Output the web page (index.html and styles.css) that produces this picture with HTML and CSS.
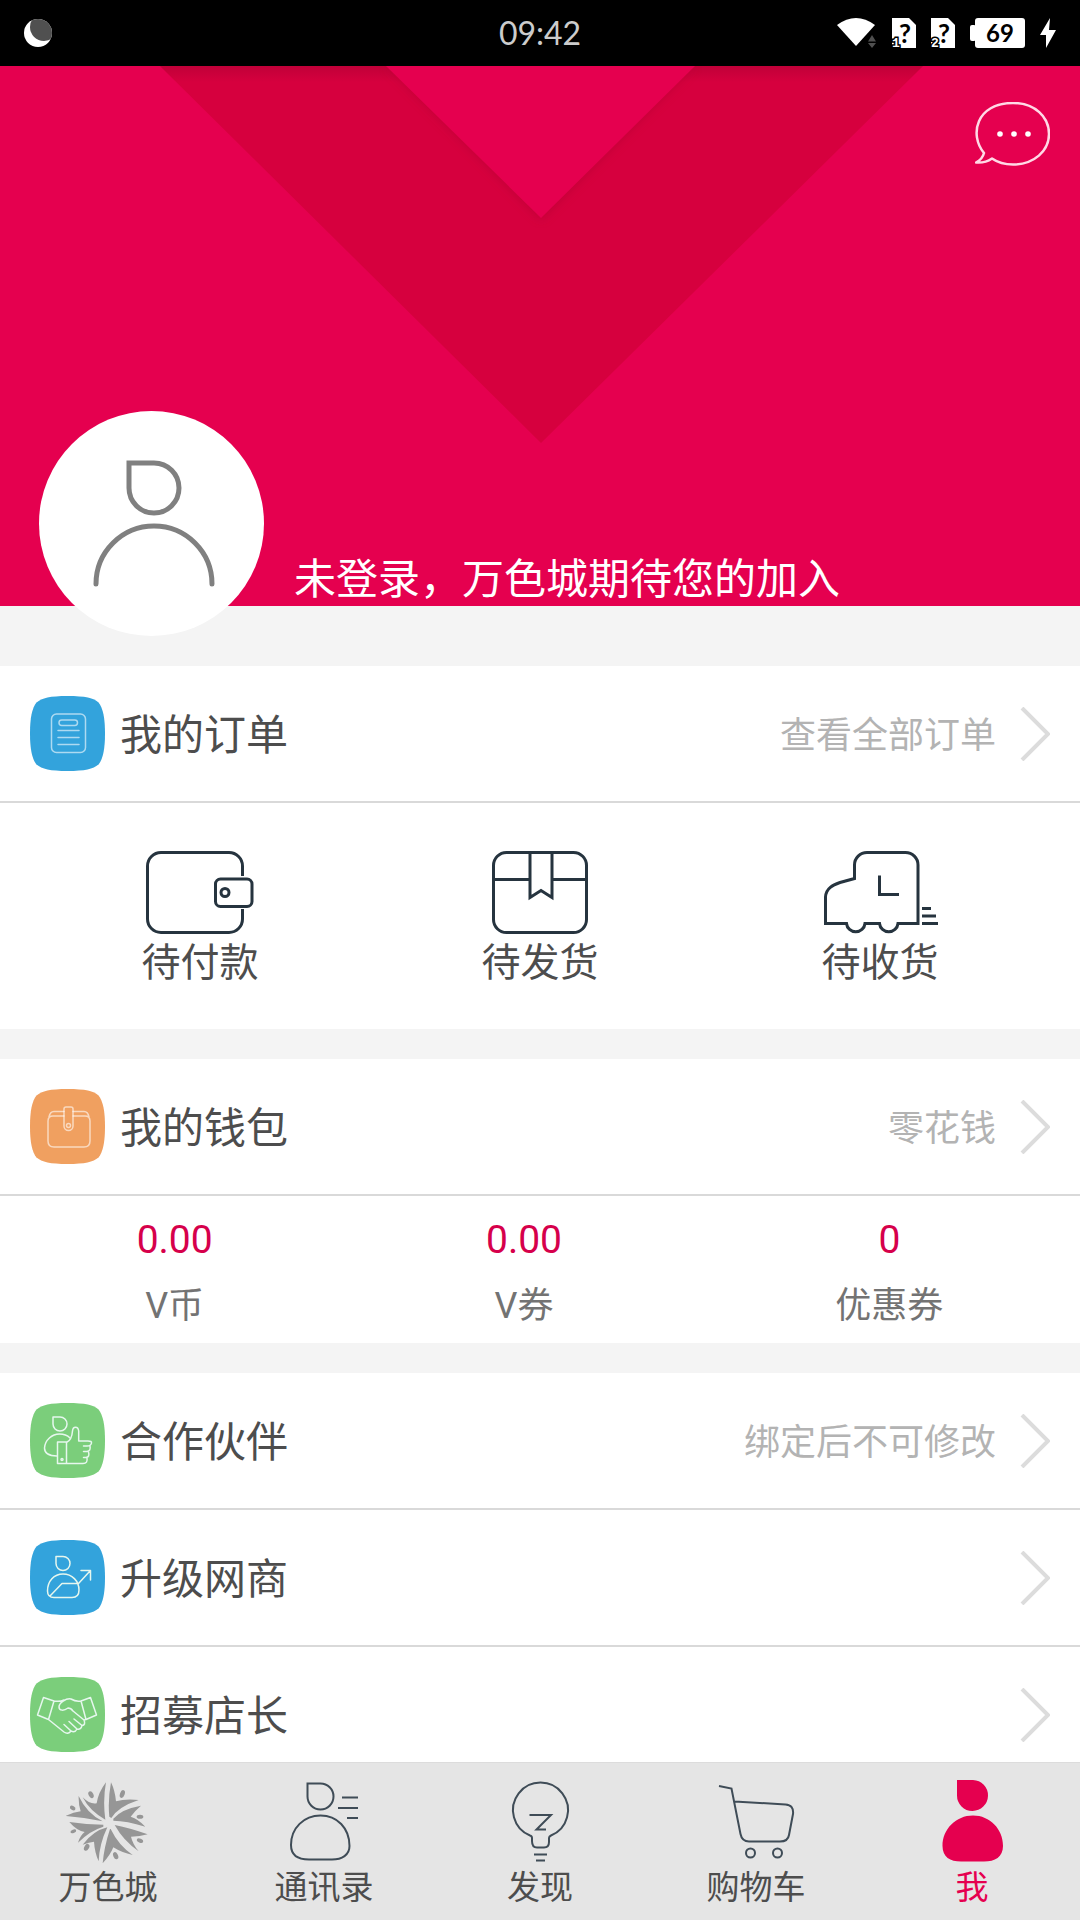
FILE: index.html
```html
<!DOCTYPE html>
<html lang="zh-CN">
<head>
<meta charset="utf-8">
<meta name="viewport" content="width=device-width, initial-scale=1">
<title>我</title>
<link rel="stylesheet" href="styles.css">
</head>
<body>
<svg class="defs" aria-hidden="true">
  <defs>
    <path id="tile" d="M37.500 0C55 0 64 2 68.500 6.500C73 12 75 22 75 37.500S73 63 68.500 68.500C63 73 55 75 37.500 75S12 73 6.500 68.500C2 63 0 53 0 37.500S2 12 6.500 6.500C12 2 20 0 37.500 0Z"/>
    <path id="chevron" d="M2 1L28 27L2 53"/>
    <path id="sim" fill="#fff" d="M0 0H17L24 7V30H0Z"/>
  </defs>
</svg>
<div class="app">
  <header class="status">
    <svg class="moon" viewBox="0 0 28 28" aria-hidden="true"><clipPath id="disc"><circle cx="14" cy="14" r="14"/></clipPath><circle cx="14" cy="14" r="14" fill="#fff"/><circle cx="20" cy="8" r="14" fill="#505050" clip-path="url(#disc)"/></svg>
    <time class="clock">09:42</time>
    <div class="signals">
      <svg class="wifi" viewBox="0 0 40 30" aria-hidden="true"><path fill="#fff" d="M0 7Q19-7 38 7L19 28Z"/><path fill="#505050" d="M31 23.500L35 17L39 23.500ZM31 25H39L35 30Z"/></svg>
      <svg class="sim" viewBox="0 0 24 30" aria-hidden="true"><use href="#sim"/><text class="sim-mark" x="13" y="25">?</text><text class="sim-slot" x="0" y="29">1</text></svg>
      <svg class="sim" viewBox="0 0 24 30" aria-hidden="true"><use href="#sim"/><text class="sim-mark" x="13" y="25">?</text><text class="sim-slot" x="0" y="29">2</text></svg>
      <span class="battery">69</span>
      <svg class="bolt" viewBox="0 0 16 30" aria-hidden="true"><path fill="#fff" d="M10 0L0 17H6L6 30L16 12H9Z"/></svg>
    </div>
  </header>

  <main class="content">
    <section class="hero">
      <svg class="hero-art" viewBox="0 0 1080 540" preserveAspectRatio="xMidYMin slice" aria-hidden="true">
        <defs>
          <linearGradient id="shade" x1="0" y1="0" x2="0" y2="1"><stop offset="0" stop-color="#a00030" stop-opacity=".4"/><stop offset="1" stop-color="#a00030" stop-opacity="0"/></linearGradient>
          <filter id="soft" x="-10%" y="-10%" width="120%" height="130%"><feGaussianBlur stdDeviation="5"/></filter>
        </defs>
        <path fill="#d6003e" d="M160 0H923L541 377Z"/>
        <path fill="url(#shade)" d="M160 0H923L907 16H176Z"/>
        <path fill="#ba0036" opacity=".7" filter="url(#soft)" d="M386 0H695L541 154Z"/>
        <path fill="#e5004f" d="M386 0H695L541 152Z"/>
      </svg>
      <a class="avatar" href="#login" aria-label="头像">
        <svg viewBox="0 0 225 225" fill="none" stroke="#808080" stroke-width="5" stroke-linecap="round"><path d="M90 52H115A25 25 0 1 1 90 77Z"/><path d="M57 173A58 58 0 0 1 173 173"/></svg>
      </a>
      <p class="greeting">未登录，万色城期待您的加入</p>
      <button class="chat" type="button" aria-label="消息">
        <svg viewBox="0 0 75 64" fill="none" stroke="#ffd9e6" stroke-width="2.500" stroke-linejoin="round"><path d="M9 51C-6 33 1 1 38 1C60 1 74 15 74 32C74 49 59 62.500 38 62.500C30 62.500 22 60 17 56.500C12 60 7 61 1 60.500C6 58 8 55 9 51Z"/><g fill="#fff" stroke="none"><circle cx="25" cy="32" r="2.800"/><circle cx="39" cy="32" r="2.800"/><circle cx="53" cy="32" r="2.800"/></g></svg>
      </button>
    </section>

    <section class="group group-first">
      <a class="row" href="#orders">
        <svg class="tile" viewBox="0 0 75 75" aria-hidden="true"><use href="#tile" fill="#33a3dc"/><g class="ink faint"><rect x="21.500" y="18" width="34" height="38.500" rx="5"/><rect x="29" y="24" width="18.500" height="5.500" rx="2.700"/><path d="M28 34.500H49M28 41.500H49M28 48.500H49"/></g></svg>
        <span class="title">我的订单</span>
        <span class="note">查看全部订单</span>
        <svg class="chevron" viewBox="0 0 30 54" aria-hidden="true"><use href="#chevron"/></svg>
      </a>
      <div class="orders">
        <a class="order" href="#unpaid">
          <svg class="wallet-icon" viewBox="0 0 108 84" aria-hidden="true"><path d="M96.500 25V15A13.500 13.500 0 0 0 83 1.500H15A13.500 13.500 0 0 0 1.500 15V68A13.500 13.500 0 0 0 15 81.500H83A13.500 13.500 0 0 0 96.500 68V58"/><rect x="69.500" y="28" width="36.500" height="27.500" rx="5"/><circle cx="79" cy="41.500" r="4"/></svg>
          <span>待付款</span>
        </a>
        <a class="order" href="#unshipped">
          <svg class="box-icon" viewBox="0 0 96 84" aria-hidden="true"><rect x="1.500" y="1.500" width="93" height="80" rx="13"/><path d="M1.500 28.500H38M60 28.500H94.500M38 1.500V46.500L49 39.500L60 46.500V1.500"/></svg>
          <span>待发货</span>
        </a>
        <a class="order" href="#shipped">
          <svg class="truck-icon" viewBox="-2 0 116 84" aria-hidden="true"><path d="M1.500 72.500V46C2 37 9 34 16 31.500L30.500 27.500V14A12.500 12.500 0 0 1 43 1.500H81.500A12.500 12.500 0 0 1 94 14V72.500H74A9.300 9.300 0 0 1 55.500 72.500H41A9.300 9.300 0 0 1 22.500 72.500ZM55.500 24.500V43.500H75M98 57.500H107M98 65H112M98 72.500H114"/></svg>
          <span>待收货</span>
        </a>
      </div>
    </section>

    <section class="group">
      <a class="row" href="#wallet">
        <svg class="tile" viewBox="0 0 75 75" aria-hidden="true"><use href="#tile" fill="#f0a060"/><g class="ink faint"><path d="M34 27H23Q18 27 18 32V52Q18 58 24 58H54Q60 58 60 52V32Q60 27 55 27H43M19 28Q20 22.500 24 22.500H34M43 22.500H54Q58 22.500 59 28"/><path d="M34 20Q34 18 36 18H41Q43 18 43 20V37A4.500 4.500 0 0 1 34 37Z"/><circle cx="38.500" cy="36.500" r="2"/></g></svg>
        <span class="title">我的钱包</span>
        <span class="note">零花钱</span>
        <svg class="chevron" viewBox="0 0 30 54" aria-hidden="true"><use href="#chevron"/></svg>
      </a>
      <dl class="balances">
        <div class="balance"><dt>V币</dt><dd>0.00</dd></div>
        <div class="balance"><dt>V券</dt><dd>0.00</dd></div>
        <div class="balance"><dt>优惠券</dt><dd>0</dd></div>
      </dl>
    </section>

    <section class="group">
      <a class="row" href="#partners">
        <svg class="tile" viewBox="0 0 75 75" aria-hidden="true"><use href="#tile" fill="#7bce7b"/><g class="ink"><path d="M23 14H30A7 7 0 1 1 23 21ZM27 53C18 53 14.500 50 14.500 45C15 37 22 31 29.500 31C34 31 37 32 40 35"/><path d="M27.500 39H36.500V60.500H27.500ZM36.500 39.500C40 38 42 35 42.500 28C43 23 48 23 48.700 28V38H58Q62 38 61.500 40Q61 43 57 43H53.500M60 43Q61 48 57 48.500H53.500M58.500 49Q60 54 56 54.500H53.500M57 55Q58 60.500 53 60.500H36.500"/><circle cx="32" cy="56.500" r="1"/></g></svg>
        <span class="title">合作伙伴</span>
        <span class="note">绑定后不可修改</span>
        <svg class="chevron" viewBox="0 0 30 54" aria-hidden="true"><use href="#chevron"/></svg>
      </a>
      <a class="row" href="#upgrade">
        <svg class="tile" viewBox="0 0 75 75" aria-hidden="true"><use href="#tile" fill="#33a3dc"/><g class="ink"><path d="M26 16.500H33A7 7 0 1 1 26 23.500ZM33 34C42 34 49 41 49 50Q49 57.500 42 57.500H24Q17.500 57.500 17.500 51C17.500 41 24 34 33 34ZM20 56L32 43.500H48.500L60 31M51 30.500H60.500V40"/></g></svg>
        <span class="title">升级网商</span>
        <svg class="chevron" viewBox="0 0 30 54" aria-hidden="true"><use href="#chevron"/></svg>
      </a>
      <a class="row" href="#recruit">
        <svg class="tile" viewBox="0 0 75 75" aria-hidden="true"><use href="#tile" fill="#7bce7b"/><g class="ink"><path d="M13.500 20.500L24 24L18.500 42.500L7.500 38ZM51 24L60.500 20.500L66.500 38L56 42.500ZM24 24Q30 25 34 23M51 24Q46 25 41 22C36 21 29 26 29 30C29 34 34 34 38 31Q41 31 43 34L54 43Q56 48 52 48.500Q51 53 47 52Q45 56 41 54Q38 58 34 55L18.500 42.500M54 43L56 42.500M44 42L52 48.500M39 44.500L47 52M34 47.500L41 54"/></g></svg>
        <span class="title">招募店长</span>
        <svg class="chevron" viewBox="0 0 30 54" aria-hidden="true"><use href="#chevron"/></svg>
      </a>
    </section>
  </main>

  <nav class="tabs">
    <a class="tab" href="#home">
      <svg viewBox="18 18 252 252" fill="#969696" aria-hidden="true"><path d="M148 128Q143 80 153 25Q165 50 168 82Q195 74 236 78Q175 98 154 132ZM160 134Q185 105 243 95Q225 110 212 128Q235 135 256 158Q200 140 160 140ZM164 153Q210 162 263 181Q240 188 213 188Q218 210 236 232Q190 200 164 153ZM152 165Q175 213 218 243Q185 236 160 220Q150 245 128 268Q132 220 150 165ZM142 160Q118 210 116 262Q104 235 102 203Q88 205 68 212Q100 170 142 160ZM130 158Q90 170 54 206Q60 185 74 174Q50 170 28 144Q80 152 130 152ZM128 142Q70 130 16 126Q40 115 62 112Q55 90 56 66Q80 118 128 142ZM136 137Q90 112 68 70Q90 92 110 88Q115 55 138 25Q128 80 136 137Z"/><ellipse cx="93" cy="62" rx="7" ry="11" transform="rotate(-28 93 62)"/><ellipse cx="187" cy="60" rx="7" ry="12" transform="rotate(20 187 60)"/><ellipse cx="240" cy="128" rx="10" ry="6"/><ellipse cx="240" cy="200" rx="10" ry="6" transform="rotate(25 240 200)"/><ellipse cx="167" cy="245" rx="7" ry="11" transform="rotate(-25 167 245)"/><ellipse cx="80" cy="220" rx="7" ry="11" transform="rotate(30 80 220)"/><ellipse cx="40" cy="172" rx="9" ry="5" transform="rotate(-20 40 172)"/><ellipse cx="38" cy="102" rx="9" ry="6" transform="rotate(30 38 102)"/></svg>
      <span>万色城</span>
    </a>
    <a class="tab" href="#contacts">
      <svg class="line" viewBox="0 0 84 84" aria-hidden="true"><path d="M25.500 3.500H38.500A13 13 0 1 1 25.500 16.500ZM38.500 35.500C55 35.500 67.500 48 67.500 66C67.500 75 60 79.500 50 79.500H27C16 79.500 9 75 9 65C9 48 22 35.500 38.500 35.500ZM60 17.500H76M56 28H76M65 38H76"/></svg>
      <span>通讯录</span>
    </a>
    <a class="tab" href="#discover">
      <svg class="line" viewBox="0 0 84 84" aria-hidden="true"><path d="M34 61V58Q34 56 32 55.500A27.500 27.500 0 1 1 53 55.500Q51 56.500 51 58V62Q51 67.500 46 67.500H39Q34 67.500 34 61ZM36 74.500H49M38 80.500H47M31.500 35H53L38.500 49.500H48"/></svg>
      <span>发现</span>
    </a>
    <a class="tab" href="#cart">
      <svg class="line" viewBox="0 0 84 84" aria-hidden="true"><path d="M5 6L17.500 8.500L26.500 54Q28 61.500 35 61.500H66Q74 61.500 75 55L79 34Q80 25 71.500 24.500L20.500 21.500"/><circle cx="36.500" cy="73" r="4.500"/><circle cx="63.500" cy="73" r="4.500"/></svg>
      <span>购物车</span>
    </a>
    <a class="tab active" href="#me" aria-current="page">
      <svg viewBox="0 0 84 84" aria-hidden="true"><path fill="#e5004f" d="M27 0H43A15.500 15.500 0 1 1 27 15.500ZM43 35.500C60 35.500 73 49 73 66C73 77 65 81.500 54 81.500H31C20 81.500 12.500 77 12.500 66C12.500 49 26 35.500 43 35.500Z"/></svg>
      <span>我</span>
    </a>
  </nav>
</div>
</body>
</html>
```
FILE: styles.css
```css
* {
  box-sizing: border-box;
}

body {
  margin: 0;
  font-family: Roboto, "Noto Sans CJK SC", sans-serif;
  color: #4d4d4d;
  background: #f4f4f4;
}

a {
  color: inherit;
  text-decoration: none;
}

svg {
  display: block;
  flex: none;
}

.defs {
  position: absolute;
  width: 0;
  height: 0;
}

.app {
  display: flex;
  flex-direction: column;
  height: 100vh;
}

/* Status bar */
.status {
  flex: none;
  display: grid;
  grid-template-columns: 1fr auto 1fr;
  align-items: center;
  height: 66px;
  padding: 0 24px;
  background: #000;
  color: #ccc;
  font-family: Lato, sans-serif;
}

.moon {
  width: 28px;
  height: 28px;
}

.clock {
  font-size: 32px;
  line-height: 40px;
  font-weight: 400;
}

.signals {
  display: flex;
  justify-content: flex-end;
  align-items: center;
  gap: 15px;
}

.wifi {
  width: 40px;
  height: 30px;
}

.sim {
  width: 24px;
  height: 30px;
  overflow: visible;
}

.sim-mark {
  font-size: 26px;
  font-weight: 700;
  text-anchor: middle;
}

.sim-slot {
  font: 700 13px "Liberation Mono", monospace;
  fill: #fff;
  stroke: #000;
  stroke-width: 3px;
  paint-order: stroke;
}

.battery {
  position: relative;
  width: 50px;
  height: 30px;
  margin-left: 5px;
  border-radius: 3px;
  background: #fff;
  color: #000;
  font-size: 24px;
  line-height: 30px;
  font-weight: 700;
  text-align: center;
}

.battery::before {
  content: "";
  position: absolute;
  left: -5px;
  top: 7px;
  width: 6px;
  height: 16px;
  border-radius: 2px;
  background: #fff;
}

.bolt {
  width: 16px;
  height: 30px;
}

/* Scrolling content */
.content {
  flex: 1;
  min-height: 0;
  overflow-y: auto;
  scrollbar-width: none;
}

.hero {
  position: relative;
  display: flex;
  align-items: flex-end;
  gap: 30px;
  height: 540px;
  padding: 36px 30px 0 39px;
  background: #e5004f;
}

.hero-art {
  position: absolute;
  inset: 0;
  width: 100%;
  height: 100%;
}

.avatar {
  position: relative;
  flex: none;
  width: 225px;
  height: 225px;
  margin-bottom: -30px;
  border-radius: 50%;
  background: #fff;
}

.greeting {
  position: relative;
  flex: 1;
  margin: 0;
  color: #fff;
  font-size: 42px;
  line-height: 52px;
}

.chat {
  position: relative;
  align-self: flex-start;
  width: 75px;
  padding: 0;
  border: 0;
  background: none;
}

.group {
  margin-top: 30px;
  background: #fff;
}

.group-first {
  margin-top: 60px;
}

.row {
  display: flex;
  align-items: center;
  height: 137px;
  padding: 0 30px;
  border-bottom: 2px solid #d9d9d9;
}

.tile {
  width: 75px;
  height: 75px;
  margin-right: 15px;
}

.ink {
  fill: none;
  stroke: #e6f7ee;
  stroke-width: 1.5px;
  stroke-linejoin: round;
  stroke-linecap: round;
}

.faint {
  stroke: #fff;
  stroke-opacity: 0.6;
}

.title {
  flex: 1;
  padding-top: 4px;
  font-size: 42px;
  line-height: 60px;
}

.note {
  margin-right: 24px;
  padding-top: 4px;
  color: #b3b3b3;
  font-size: 36px;
  line-height: 54px;
}

.chevron {
  width: 30px;
  height: 54px;
  fill: none;
  stroke: #dcdcdc;
  stroke-width: 4px;
}

.orders {
  display: grid;
  grid-template-columns: repeat(3, 1fr);
  padding: 48px 30px 38px;
}

.order {
  display: flex;
  flex-direction: column;
  align-items: center;
  font-size: 39px;
  line-height: 56px;
}

.order svg {
  height: 84px;
  fill: none;
  stroke: #26343f;
  stroke-width: 3px;
}

.wallet-icon {
  width: 108px;
}

.box-icon {
  width: 96px;
}

.truck-icon {
  width: 116px;
}

.balances {
  display: flex;
  justify-content: space-around;
  margin: 0;
  padding: 17px 0 10px;
}

.balance {
  display: flex;
  flex-direction: column-reverse;
  align-items: center;
  gap: 12px;
}

.balance dt {
  color: #737373;
  font-size: 36px;
  line-height: 54px;
}

.balance dd {
  margin: 0;
  color: #d6004b;
  font-size: 39px;
  line-height: 54px;
}

/* Bottom tab bar */
.tabs {
  flex: none;
  display: grid;
  grid-template-columns: repeat(5, 1fr);
  height: 158px;
  padding-top: 17px;
  border-top: 1px solid #dcdcdc;
  background: #e5e5e5;
}

.tab {
  display: flex;
  flex-direction: column;
  align-items: center;
  font-size: 33px;
  line-height: 48px;
}

.tab svg {
  width: 84px;
  height: 84px;
}

.line {
  fill: none;
  stroke: #3f4c57;
  stroke-width: 2px;
}

.active {
  color: #e5004f;
}
```
